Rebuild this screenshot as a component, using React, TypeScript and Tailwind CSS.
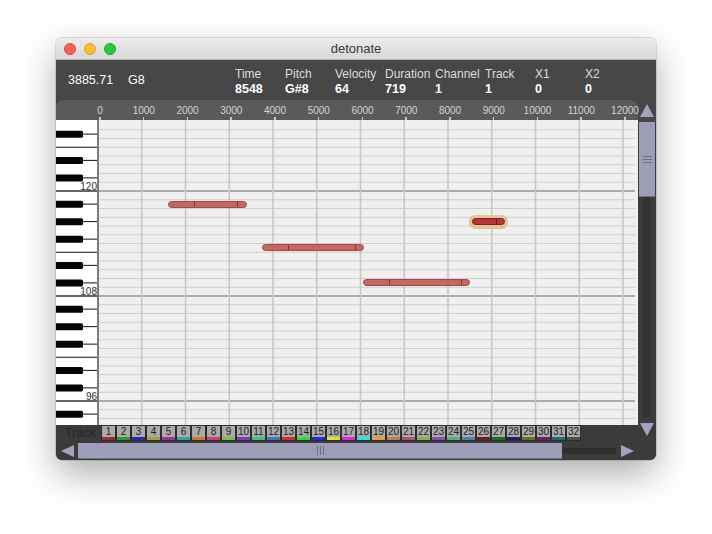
import React from 'react';

const ROW = 8.75;
const ROWS = 35;
const BLACK = [1, 3, 6, 8, 10];

const fields = [
  { label: 'Time', value: '8548' },
  { label: 'Pitch', value: 'G#8' },
  { label: 'Velocity', value: '64' },
  { label: 'Duration', value: '719' },
  { label: 'Channel', value: '1' },
  { label: 'Track', value: '1' },
  { label: 'X1', value: '0' },
  { label: 'X2', value: '0' },
];

const trackColors = [
  '#a82a2a', '#2a9c2a', '#2a2aa8', '#a8a42a', '#a82aa8', '#2aa8a8', '#d4782c', '#d23c74',
  '#78c43c', '#7a3cc8', '#3cc878', '#3c78c8', '#e42626', '#26e426', '#2626e4', '#e4e426',
  '#e426e4', '#26e4e4', '#f0a02a', '#b4824e', '#b44e78', '#82b44e', '#824eb4', '#4eb482',
  '#4e82b4', '#6e1e1e', '#1e6e1e', '#1e1e6e', '#6e6e1e', '#6e1e6e', '#1e6e6e', '#4e4e4e',
];

const notes = [
  { x: 69, w: 79, c: 204.1, ticks: [25, 68] },
  { x: 163, w: 102, c: 247.9, ticks: [25, 92] },
  { x: 264, w: 107, c: 282.9, ticks: [25, 97] },
];

function Keyboard() {
  const keys = Array.from({ length: ROWS }, (_, k) => {
    const pitch = 127 - k;
    const pc = pitch % 12;
    const top = 1 + k * ROW;
    return { k, pitch, pc, top, mid: top + ROW / 2, bottom: top + ROW };
  });
  return (
    <div className="relative w-[43px] h-full bg-white border-r-2 border-[#7c7c7c] overflow-hidden">
      <svg width="43" height="305" className="absolute inset-0">
        {keys.map((r) =>
          BLACK.includes(r.pc) ? (
            <g key={r.k}>
              <rect x="-2" y={r.mid - 3.5} width="29" height="7" rx="1.5" fill="#050505" />
              <line x1="27" x2="43" y1={r.mid} y2={r.mid} stroke="#111" strokeWidth="1" />
            </g>
          ) : r.pc === 0 ? (
            <line key={r.k} x1="0" x2="43" y1={r.bottom} y2={r.bottom} stroke="#666" strokeWidth="2" />
          ) : r.pc === 5 ? (
            <line key={r.k} x1="0" x2="43" y1={r.bottom} y2={r.bottom} stroke="#111" strokeWidth="1" />
          ) : null
        )}
      </svg>
      {keys
        .filter((r) => r.pc === 0)
        .map((r) => (
          <span
            key={r.k}
            className="absolute right-0 text-[10px] leading-[10px] text-[#333]"
            style={{ top: r.top }}
          >
            {r.pitch}
          </span>
        ))}
    </div>
  );
}

function Grid() {
  return (
    <div className="relative flex-1 h-full bg-[#efefef] overflow-hidden">
      <svg width="536" height="305" className="absolute inset-0">
        {Array.from({ length: ROWS }, (_, k) => {
          const pc = (127 - k) % 12;
          const y = 1 + (k + 1) * ROW;
          return pc === 0 ? (
            <line key={k} x1="0" x2="536" y1={y} y2={y} stroke="#ababab" strokeWidth="2" />
          ) : (
            <line key={k} x1="0" x2="536" y1={y} y2={y} stroke="#cfcfcf" strokeWidth="1" />
          );
        })}
        {Array.from({ length: 12 }, (_, i) => {
          const x = (i + 1) * 43.75 - 1;
          return <line key={i} x1={x} x2={x} y1="0" y2="305" stroke="#c6c6c6" strokeWidth="1.5" />;
        })}
      </svg>

      {notes.map((n, i) => (
        <div
          key={i}
          className="absolute h-[7px] rounded-full bg-[#c46666] border border-[#a44848]"
          style={{ left: n.x, top: n.c - 123.5, width: n.w }}
        >
          {n.ticks.map((t) => (
            <div key={t} className="absolute top-0 bottom-0 w-[1px] bg-[#8e3434]" style={{ left: t }} />
          ))}
        </div>
      ))}

      {/* selected note */}
      <div className="absolute left-[370px] top-[95px] w-[39px] h-[14px] rounded-[6px] bg-[#dcc6a0]" />
      <div className="absolute left-[373px] top-[98px] w-[33px] h-[7px] rounded-full bg-[#b53636] border border-[#8a1e1e]">
        <div className="absolute top-0 bottom-0 left-[23px] w-[1px] bg-[#6e1414]" />
      </div>
    </div>
  );
}

function Tri({ dir }: { dir: 'up' | 'down' | 'left' | 'right' }) {
  const pts = {
    up: '7,0 14,13 0,13',
    down: '0,0 14,0 7,13',
    left: '0,6 13,0 13,12',
    right: '0,0 13,6 0,12',
  }[dir];
  const vertical = dir === 'up' || dir === 'down';
  return (
    <svg width={vertical ? 14 : 13} height={vertical ? 13 : 12}>
      <polygon points={pts} fill="#a2a2bd" />
    </svg>
  );
}

export default function App() {
  return (
    <div className="w-[712px] h-[534px] bg-white pt-[38px] pl-[56px] font-['Liberation_Sans',Arial,sans-serif]">
      <div className="w-[600px] h-[422px] rounded-[6px] overflow-hidden flex flex-col shadow-[0_14px_36px_rgba(0,0,0,0.32),0_0_0_1px_rgba(0,0,0,0.12)]">
        {/* title bar */}
        <div className="h-[22px] grid grid-cols-[1fr_auto_1fr] items-center bg-gradient-to-b from-[#ececec] to-[#d7d7d7] border-b border-[#b5b5b5]">
          <div className="flex items-center gap-[8px] pl-[8px]">
            <div className="w-[12px] h-[12px] rounded-full bg-[#fe5f57] border border-[#e0443e]" />
            <div className="w-[12px] h-[12px] rounded-full bg-[#febc2e] border border-[#dea123]" />
            <div className="w-[12px] h-[12px] rounded-full bg-[#28c840] border border-[#1aab29]" />
          </div>
          <div className="text-[13px] text-[#3a3a3a]">detonate</div>
          <div />
        </div>

        {/* info bar */}
        <div className="h-[40px] bg-[#474747] flex items-center text-white">
          <div className="pl-[12px] w-[72px] text-[12.5px] font-medium">3885.71</div>
          <div className="w-[107px] text-[12.5px] font-medium">G8</div>
          {fields.map((f) => (
            <div key={f.label} className="w-[50px] flex flex-col pt-[3px]">
              <span className="text-[12px] leading-[15px] text-[#dcdcdc] whitespace-nowrap">{f.label}</span>
              <span className="text-[12.5px] leading-[15px] font-bold">{f.value}</span>
            </div>
          ))}
        </div>

        {/* main */}
        <div className="h-[360px] flex bg-[#474747]">
          <div className="w-[582px] flex flex-col">
            {/* ruler */}
            <div className="relative h-[20px] bg-[#5a5a5a] rounded-t-[8px]">
              {Array.from({ length: 13 }, (_, k) => (
                <React.Fragment key={k}>
                  <span
                    className="absolute top-[6px] -translate-x-1/2 text-[10px] leading-[10px] text-[#d4d4d4]"
                    style={{ left: 44 + k * 43.75 }}
                  >
                    {k * 1000}
                  </span>
                  <div
                    className="absolute bottom-0 h-[3px] w-[1.5px] bg-[#c8c8c8]"
                    style={{ left: 43 + k * 43.75 }}
                  />
                </React.Fragment>
              ))}
            </div>

            {/* roll */}
            <div className="h-[305px] flex">
              <Keyboard />
              <Grid />
            </div>

            {/* tracks */}
            <div className="h-[16px] flex items-stretch bg-[#3b3b3b]">
              <div className="w-[45px] pl-[9px] text-[12.5px] leading-[17px] text-[#262626]">Track</div>
              <div className="flex gap-[2px] bg-[#2c2c2c] px-[1px] pt-[1px]">
                {trackColors.map((c, i) => (
                  <div key={i} className="w-[13px] flex flex-col">
                    <div className="h-[11px] bg-[#aaaaaa] text-[10px] leading-[11px] text-center text-[#1e1e1e]">
                      {i + 1}
                    </div>
                    <div className="h-[3px]" style={{ backgroundColor: c }} />
                  </div>
                ))}
              </div>
            </div>

            {/* horizontal scroll */}
            <div className="h-[19px] flex items-center bg-[#3b3b3b]">
              <div className="w-[22px] flex justify-center pl-[1px]">
                <Tri dir="left" />
              </div>
              <div className="w-[484px] h-[16px] bg-[#9d9db7] border-b border-[#6e6e86] flex items-center justify-center gap-[2px]">
                <div className="w-[1px] h-[9px] bg-[#6f6f8a]" />
                <div className="w-[1px] h-[9px] bg-[#6f6f8a]" />
                <div className="w-[1px] h-[9px] bg-[#6f6f8a]" />
              </div>
              <div className="w-[54px] h-[6px] bg-[#2f2f2f]" />
              <div className="flex-1 flex justify-center">
                <Tri dir="right" />
              </div>
            </div>
          </div>

          {/* vertical scroll */}
          <div className="w-[18px] flex flex-col bg-[#3b3b3b]">
            <div className="h-[22px] bg-[#474747] flex items-start justify-center pt-[4px]">
              <Tri dir="up" />
            </div>
            <div className="h-[75px] mx-[1px] bg-[#9d9db7] border-b border-[#6e6e86] flex flex-col items-center justify-center gap-[2px]">
              <div className="w-[9px] h-[1px] bg-[#6f6f8a]" />
              <div className="w-[9px] h-[1px] bg-[#6f6f8a]" />
              <div className="w-[9px] h-[1px] bg-[#6f6f8a]" />
            </div>
            <div className="flex-1 w-[7px] ml-[5px] bg-[#323232] mb-[4px]" />
            <div className="h-[20px] flex items-start justify-center pt-[2px]">
              <Tri dir="down" />
            </div>
            <div className="h-[19px]" />
          </div>
        </div>
      </div>
    </div>
  );
}
